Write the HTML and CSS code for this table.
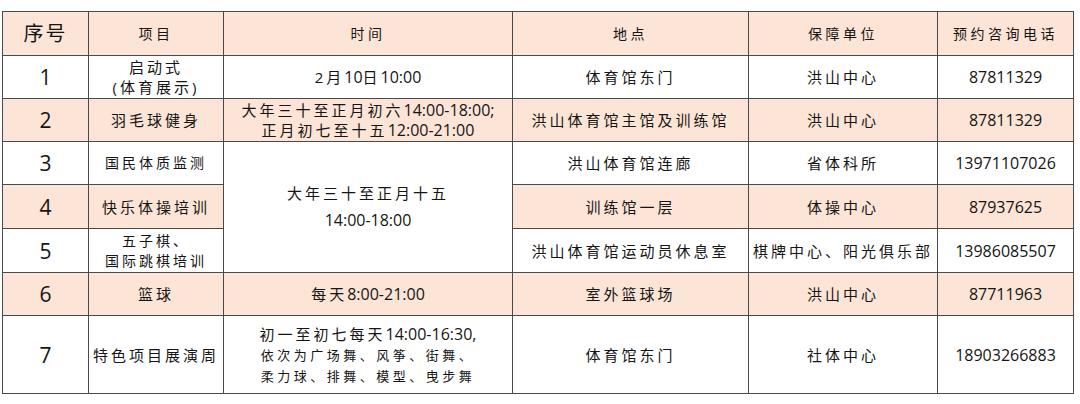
FILE: index.html
```html
<!DOCTYPE html>
<html lang="zh">
<head>
<meta charset="utf-8">
<title>活动安排</title>
<link rel="stylesheet" href="styles.css">
</head>
<body>
<div class="wrap">
<table class="sched">
  <colgroup>
    <col class="c1"><col class="c2"><col class="c3"><col class="c4"><col class="c5"><col class="c6">
  </colgroup>
  <thead>
    <tr class="head">
      <th class="big">序号</th>
      <th>项目</th>
      <th>时间</th>
      <th>地点</th>
      <th>保障单位</th>
      <th>预约咨询电话</th>
    </tr>
  </thead>
  <tbody>
    <tr class="r43">
      <td class="num">1</td>
      <td class="two">启动式<br>(体育展示)</td>
      <td>2月<span class="n">10</span>日<span class="n">10:00</span></td>
      <td>体育馆东门</td>
      <td>洪山中心</td>
      <td class="tel">87811329</td>
    </tr>
    <tr class="r43 peach">
      <td class="num">2</td>
      <td>羽毛球健身</td>
      <td class="two">大年三十至正月初六<span class="n">14:00-18:00;</span><br>正月初七至十五<span class="n">12:00-21:00</span></td>
      <td>洪山体育馆主馆及训练馆</td>
      <td>洪山中心</td>
      <td class="tel">87811329</td>
    </tr>
    <tr class="r43">
      <td class="num">3</td>
      <td class="sm">国民体质监测</td>
      <td rowspan="3" class="merged">大年三十至正月十五<br><span class="n">14:00-18:00</span></td>
      <td>洪山体育馆连廊</td>
      <td>省体科所</td>
      <td class="tel">13971107026</td>
    </tr>
    <tr class="r44 peach">
      <td class="num">4</td>
      <td>快乐体操培训</td>
      <td>训练馆一层</td>
      <td>体操中心</td>
      <td class="tel">87937625</td>
    </tr>
    <tr class="r44">
      <td class="num">5</td>
      <td class="two sm">五子棋、<br>国际跳棋培训</td>
      <td>洪山体育馆运动员休息室</td>
      <td>棋牌中心、阳光俱乐部</td>
      <td class="tel">13986085507</td>
    </tr>
    <tr class="r43 peach">
      <td class="num">6</td>
      <td>篮球</td>
      <td>每天<span class="n">8:00-21:00</span></td>
      <td>室外篮球场</td>
      <td>洪山中心</td>
      <td class="tel">87711963</td>
    </tr>
    <tr class="r78">
      <td class="num">7</td>
      <td>特色项目展演周</td>
      <td class="two">初一至初七每天<span class="n">14:00-16:30,</span><br><span class="small">依次为广场舞、风筝、街舞、<br>柔力球、排舞、模型、曳步舞</span></td>
      <td>体育馆东门</td>
      <td>社体中心</td>
      <td class="tel">18903266883</td>
    </tr>
  </tbody>
</table>
</div>
</body>
</html>
```

FILE: styles.css
```css
html, body {
  margin: 0;
  padding: 0;
  background: #ffffff;
}

.wrap {
  padding: 11px 0 0 2px;
}

.sched {
  width: 1071px;
  table-layout: fixed;
  border-collapse: collapse;
  font-family: "Open Sans", "Noto Sans CJK SC", sans-serif;
  color: #151515;
}

.c1 { width: 86px; }
.c2 { width: 135px; }
.c3 { width: 289px; }
.c4 { width: 236px; }
.c5 { width: 189px; }
.c6 { width: 136px; }

.sched th,
.sched td {
  border: 1px solid #4a4a4a;
  padding: 0 2px;
  text-align: center;
  vertical-align: middle;
  font-size: 15px;
  font-weight: 400;
  letter-spacing: 3px;
  line-height: 20px;
  white-space: nowrap;
  overflow: hidden;
}

.head { height: 44px; background: #fce4d6; }
.head th { font-size: 14px; letter-spacing: 3.5px; }
.head th.big { font-size: 20px; letter-spacing: 2px; }

.r43 { height: 43px; }
.r44 { height: 44px; }
.r78 { height: 78px; }

.peach td { background: #fce4d6; }
.peach td.merged { background: #ffffff; }

.sched td.num {
  font-size: 21px;
  letter-spacing: 0;
  font-weight: 400;
}

.sched td.tel {
  font-size: 16px;
  letter-spacing: 0;
}

.sched td.sm { font-size: 14px; letter-spacing: 3px; }

.sched td.merged { line-height: 27px; }

.n { letter-spacing: 0; font-size: 16px; }

.small { font-size: 13px; letter-spacing: 3.5px; }
```
